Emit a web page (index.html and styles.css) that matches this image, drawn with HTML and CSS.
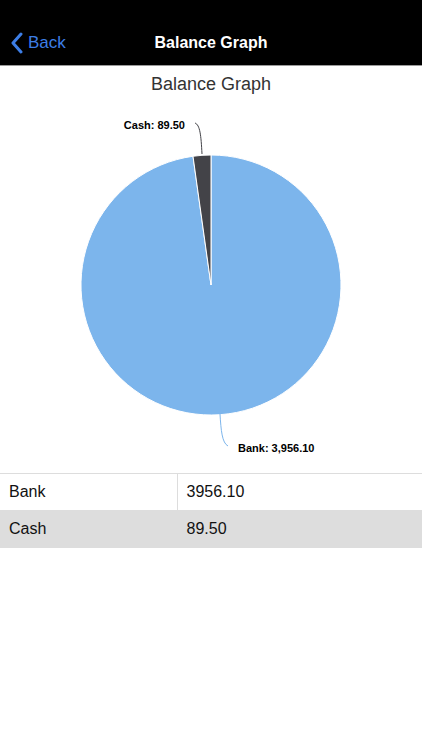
FILE: index.html
```html
<!DOCTYPE html>
<html lang="en">

<head>
  <meta charset="UTF-8">
  <meta name="viewport" content="width=device-width, initial-scale=1.0">
  <title>Balance Graph</title>
  <link rel="stylesheet" href="styles.css">
</head>

<body>
  <header class="navbar">
    <a class="back" href="#">
      <svg class="chevron" width="13" height="22" viewBox="0 0 13 22">
        <path d="M11 2 L3 11 L11 20" fill="none" stroke="#3d7ee6" stroke-width="3" stroke-linecap="round" stroke-linejoin="round" />
      </svg>
      <span>Back</span>
    </a>
    <h1 class="nav-title">Balance Graph</h1>
  </header>

  <main>
    <h2 class="chart-title">Balance Graph</h2>
    <svg class="chart" width="422" height="370" viewBox="0 0 422 370">
      <path d="M211,185 L211,55 A130,130 0 1,1 193,56.25 Z" fill="#7cb5ec" stroke="#fff" stroke-width="1" />
      <path d="M211,185 L193,56.25 A130,130 0 0,1 211,55 Z" fill="#434348" stroke="#fff" stroke-width="1" />
      <path d="M195,23 C200,25 201,35 202,54" fill="none" stroke="#434348" stroke-width="1" />
      <path d="M220,314 C221,330 222,343 228,346" fill="none" stroke="#7cb5ec" stroke-width="1" />
      <text class="label" x="185" y="29" text-anchor="end">Cash: 89.50</text>
      <text class="label" x="238" y="352">Bank: 3,956.10</text>
    </svg>

    <table class="balances">
      <tr>
        <td>Bank</td>
        <td>3956.10</td>
      </tr>
      <tr class="alt">
        <td>Cash</td>
        <td>89.50</td>
      </tr>
    </table>
  </main>
</body>

</html>
```

FILE: styles.css
```css
html {
  box-sizing: border-box;
  font-family: "Liberation Sans", Arial, sans-serif;
  font-size: 16px;
}

*,
*::before,
*::after {
  box-sizing: inherit;
}

body {
  margin: 0;
  min-height: 100vh;
  background-color: #fff;
}

.navbar {
  position: relative;
  height: 66px;
  background-color: #000;
  border-bottom: 1px solid #9a9a9a;
  display: flex;
  align-items: flex-end;
  padding: 0 0 11px 10px;
}

.back {
  display: flex;
  align-items: center;
  gap: 5px;
  color: #3d7ee6;
  text-decoration: none;
  font-size: 17px;
  height: 22px;
}

.nav-title {
  position: absolute;
  left: 0;
  right: 0;
  bottom: 13px;
  margin: 0;
  text-align: center;
  color: #fff;
  font-size: 16px;
  font-weight: bold;
  pointer-events: none;
}

.chart-title {
  margin: 6px 0 0;
  text-align: center;
  font-size: 18px;
  font-weight: normal;
  color: #333;
  line-height: 24px;
}

.chart {
  display: block;
  margin-top: 4px;
}

.label {
  font-family: "Liberation Sans", Arial, sans-serif;
  font-size: 11px;
  font-weight: bold;
  fill: #000;
}

.balances {
  width: 100%;
  border-collapse: collapse;
  margin-top: 3px;
}

.balances td {
  height: 37px;
  padding: 0 9px;
  font-size: 16px;
  color: #111;
  border: 1px solid #ddd;
}

.balances td:first-child {
  width: 177px;
  border-left: none;
}

.balances td:last-child {
  border-right: none;
}

.balances .alt td {
  background-color: #dddddd;
}
```
